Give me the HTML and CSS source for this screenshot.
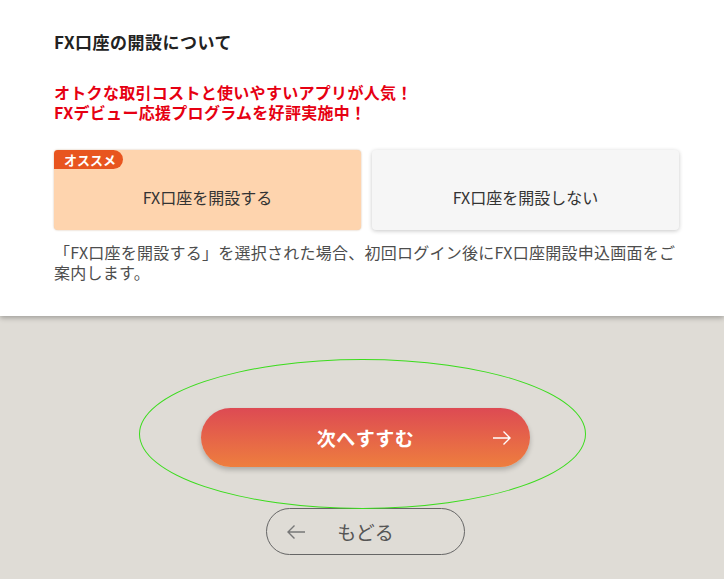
FILE: index.html
```html
<!DOCTYPE html>
<html lang="ja">

<head>
    <meta charset="UTF-8">
    <meta name="viewport" content="width=device-width, initial-scale=1.0">
    <title>FX口座の開設について</title>
    <link rel="stylesheet" href="styles.css">
</head>

<body>
    <!-- Question panel -->
    <section class="panel">
        <h2 class="panel-title">FX口座の開設について</h2>

        <p class="promo">オトクな取引コストと使いやすいアプリが人気！<br>FXデビュー応援プログラムを好評実施中！</p>

        <div class="choices">
            <button class="choice choice-selected">
                <span class="badge">オススメ</span>
                FX口座を開設する
            </button>
            <button class="choice">FX口座を開設しない</button>
        </div>

        <p class="note">「FX口座を開設する」を選択された場合、初回ログイン後にFX口座開設申込画面をご案内します。</p>
    </section>

    <!-- Navigation -->
    <div class="actions">
        <button class="next-button">
            次へすすむ
            <svg class="next-arrow" width="18" height="14" viewBox="0 0 18 14" fill="none" stroke="#fff" stroke-width="1.4">
                <path d="M0 7 H17 M10.5 0.5 L17 7 L10.5 13.5" />
            </svg>
        </button>
        <button class="back-button">
            <svg class="back-arrow" width="18" height="14" viewBox="0 0 18 14" fill="none" stroke="#777" stroke-width="1.4">
                <path d="M18 7 H1 M7.5 0.5 L1 7 L7.5 13.5" />
            </svg>
            もどる
        </button>
        <div class="focus-ring"></div>
    </div>
</body>

</html>
```

FILE: styles.css
```css
/* Base styling */
body {
    font-family: "Noto Sans CJK JP", "Noto Sans", sans-serif;
    margin: 0;
    background-color: #dfdcd6;
    color: #333;
}

button {
    font-family: inherit;
    cursor: pointer;
}

/* Panel */
.panel {
    background: #fff;
    padding: 30px 45px 34px 54px;
    box-shadow: 0 2px 5px rgba(0, 0, 0, 0.28);
}

.panel-title {
    margin: 0;
    font-size: 17px;
    line-height: 24px;
    font-weight: bold;
    letter-spacing: 0.5px;
    color: #222;
}

.promo {
    margin: 28px 0 0;
    font-size: 16px;
    line-height: 20px;
    font-weight: bold;
    letter-spacing: 0.3px;
    color: #e60012;
}

/* Choice cards */
.choices {
    display: flex;
    gap: 11px;
    margin-top: 28px;
}

.choice {
    position: relative;
    flex: 1;
    height: 80px;
    padding: 14px 0 0;
    border: none;
    border-radius: 4px;
    background: #f6f6f6;
    font-size: 16px;
    color: #333;
    box-shadow: 0 1px 4px rgba(0, 0, 0, 0.22);
}

.choice-selected {
    background: #fed4ae;
    box-shadow: 0 0 2px rgba(150, 90, 30, 0.45);
}

.badge {
    position: absolute;
    top: 0;
    left: 0;
    height: 19px;
    padding: 0 7px 0 10px;
    border-radius: 4px 10px 10px 0;
    background: #e8551f;
    color: #fff;
    font-size: 13px;
    line-height: 19px;
    font-weight: bold;
}

.note {
    margin: 12px 0 0;
    font-size: 16px;
    line-height: 20px;
    letter-spacing: 0.25px;
    color: #4d4d4d;
}

/* Navigation buttons */
.actions {
    position: relative;
    display: flex;
    flex-direction: column;
    align-items: center;
    padding: 92px 0 0 7px;
}

.next-button {
    position: relative;
    width: 329px;
    height: 59px;
    border: none;
    border-radius: 30px;
    background: linear-gradient(180deg, #dd4a53, #ee7e3e);
    color: #fff;
    font-size: 19px;
    font-weight: bold;
    letter-spacing: 0.5px;
    box-shadow: 0 3px 5px rgba(0, 0, 0, 0.22);
}

.next-arrow {
    position: absolute;
    right: 19px;
    top: 23px;
}

.back-button {
    position: relative;
    width: 199px;
    height: 47px;
    margin-top: 41px;
    border: 1px solid #666;
    border-radius: 24px;
    background: transparent;
    color: #555;
    font-size: 19px;
}

.back-arrow {
    position: absolute;
    left: 20px;
    top: 16px;
}

/* Highlight annotation */
.focus-ring {
    position: absolute;
    left: 139px;
    top: 43px;
    width: 445px;
    height: 148px;
    border: 1.5px solid #3cdc1e;
    border-radius: 50%;
    pointer-events: none;
}
```
